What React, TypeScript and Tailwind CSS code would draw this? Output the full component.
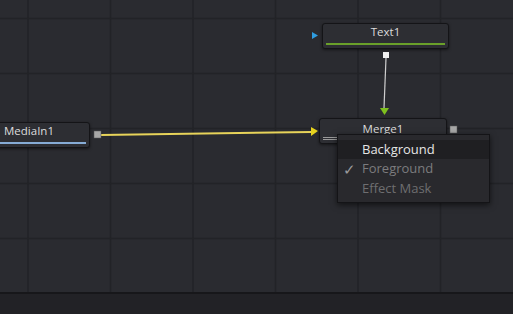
import React from 'react';

const xs = [28, 110.5, 193, 275.5, 358, 440.5];
const ys = [18.5, 73.5, 128.5, 183.5, 238.5];

function Grid() {
  return (
    <svg className="absolute inset-0" width="513" height="292">
      {xs.map((x) => (
        <line key={'v' + x} x1={x} y1={0} x2={x} y2={292} stroke="#222327" strokeWidth="1.5" />
      ))}
      {ys.map((y) => (
        <line key={'h' + y} x1={0} y1={y} x2={513} y2={y} stroke="#222327" strokeWidth="1.5" />
      ))}
    </svg>
  );
}

function Wires() {
  return (
    <svg className="absolute inset-0" width="513" height="292">
      {/* MediaIn1 -> Merge1 */}
      <line x1="101" y1="135" x2="312" y2="132" stroke="#e8d45a" strokeWidth="2" />
      <polygon points="311,127 318,131 311,136" fill="#e6d21e" />
      {/* Text1 -> Merge1 */}
      <line x1="386" y1="58" x2="384" y2="108" stroke="#cfcfcf" strokeWidth="1.2" />
      <polygon points="380,108 389,108 384.5,115" fill="#7ec01e" />
      <rect x="383" y="52" width="6" height="6" fill="#f2f2f2" />
      {/* Text1 input */}
      <polygon points="312,32 318,35.5 312,39" fill="#2f9de0" />
      {/* MediaIn1 output */}
      <rect x="94" y="131" width="7" height="7" fill="#a7a7a7" stroke="#555" strokeWidth="0.5" />
      {/* Merge1 output */}
      <rect x="450" y="126" width="7" height="7" fill="#a7a7a7" stroke="#555" strokeWidth="0.5" />
    </svg>
  );
}

function Node({ label, className, bar }: { label: string; className: string; bar: string }) {
  return (
    <div
      className={`absolute h-[26px] rounded-[3px] border border-[#141417] bg-[#2d2e33] shadow-[0_1px_3px_rgba(0,0,0,0.5)] flex flex-col ${className}`}
    >
      <div className="flex-1 flex items-center justify-center text-[11.5px] leading-none text-[#dcdcdc] pb-[3px]">
        {label}
      </div>
      <div className={`mx-[3px] mb-[3px] h-[2px] ${bar}`} />
    </div>
  );
}

export default function App() {
  return (
    <div className="w-[513px] h-[314px] overflow-hidden bg-[#222226] font-['Open_Sans',sans-serif]">
      <div className="relative w-[513px] h-[292px] bg-[#2a2b30]">
        <Grid />
        <Wires />
        <Node label="Text1" className="left-[322px] top-[23px] w-[127px]" bar="bg-[#6aa02a]" />
        <div className="absolute left-[-6px] top-[122px] w-[96px] h-[26px] rounded-[3px] border border-[#141417] bg-[#2d2e33] shadow-[0_1px_3px_rgba(0,0,0,0.5)] flex flex-col">
          <div className="flex-1 flex items-center pl-[9px] text-[11.5px] leading-none text-[#dcdcdc] pb-[3px]">
            MediaIn1
          </div>
          <div className="mr-[3px] mb-[3px] h-[2px] bg-[#86acd6]" />
        </div>
        <div className="absolute left-[319px] top-[118px] w-[128px] h-[26px] rounded-[3px] border border-[#141417] bg-[#2d2e33] shadow-[0_1px_3px_rgba(0,0,0,0.5)]">
          <div className="flex justify-center pt-[3px] text-[11.5px] leading-[14px] text-[#dcdcdc]">Merge1</div>
          <div className="absolute left-[3px] top-[18px] w-[14px] flex flex-col gap-[1px]">
            <div className="h-[1px] bg-[#9a9a9a]" />
            <div className="h-[1px] bg-[#9a9a9a]" />
          </div>
        </div>
        <div className="absolute left-[337px] top-[134px] w-[153px] h-[69px] border border-[#141417] bg-[#29292d] shadow-[0_2px_6px_rgba(0,0,0,0.6)] pt-[5px] text-[13px]">
          <div className="h-[19px] bg-[#1f1f22] flex items-center pl-[24px] text-[#e6e6e6]">Background</div>
          <div className="relative h-[20px] flex items-center pl-[24px] text-[#7c7c7e]">
            <span className="absolute left-[5px] top-[0px] text-[15px] leading-[20px] text-[#9a9a9c]">✓</span>
            Foreground
          </div>
          <div className="h-[20px] flex items-center pl-[24px] text-[#6e6e70]">Effect Mask</div>
        </div>
      </div>
      <div className="h-[2px] bg-[#17171a]" />
    </div>
  );
}
